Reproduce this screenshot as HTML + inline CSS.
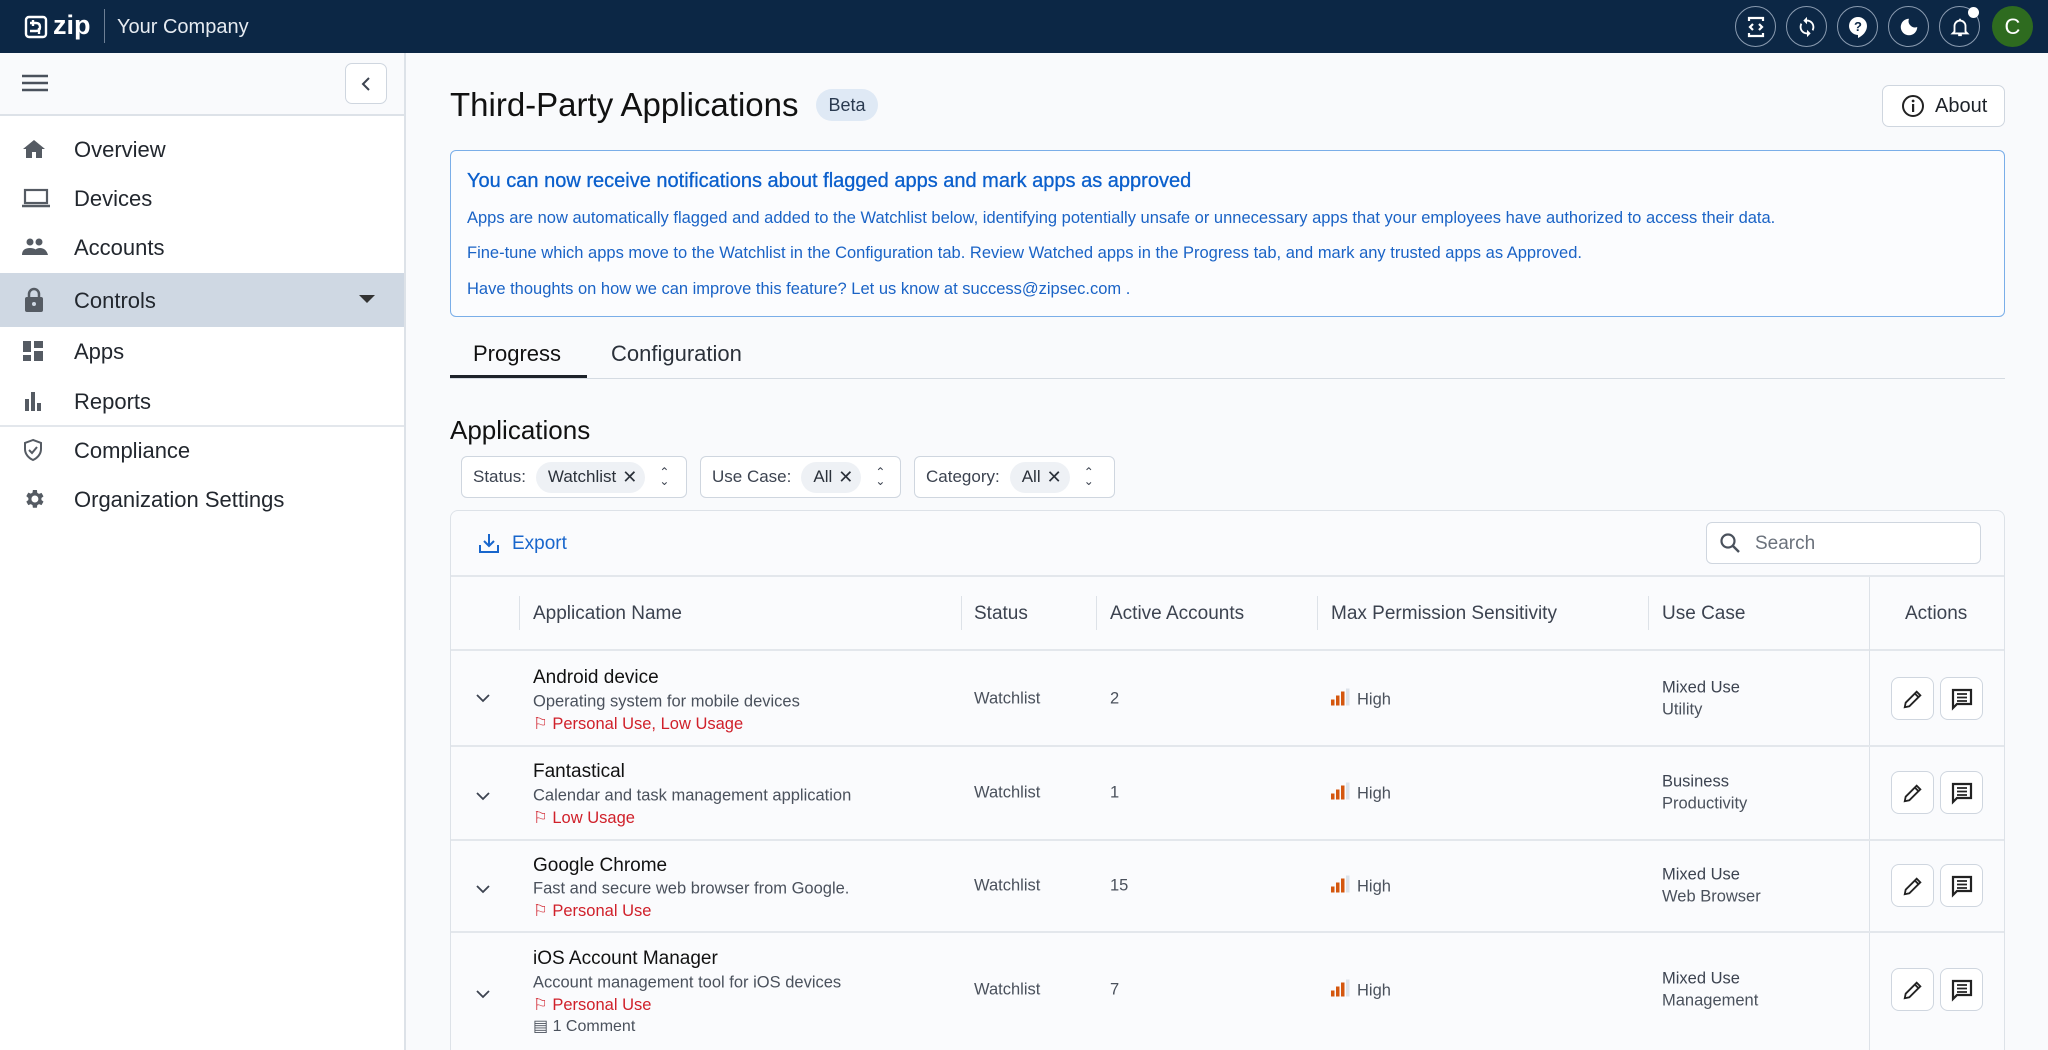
<!DOCTYPE html>
<html><head><meta charset="utf-8"><style>
*{box-sizing:border-box;margin:0;padding:0}
html{width:2048px;height:1050px;overflow:hidden}
body{width:2048px;height:1050px;overflow:hidden;background:#f9fafc;font-family:"Liberation Sans",sans-serif;color:#1d2229;position:relative}
.a{position:absolute;white-space:nowrap}
.hdr{left:0;top:0;width:2048px;height:53px;background:#0c2745}
.ic{width:41px;height:41px;border-radius:50%;border:1.5px solid #8a9bb0;top:6px;display:flex;align-items:center;justify-content:center}
.side{left:0;top:53px;width:406px;height:997px;background:#fff;border-right:2px solid #dde2e8}
.nav{left:74px;font-size:22px;color:#22272e;transform:translateY(-50%)}
.ni{left:22px;transform:translateY(-50%)}
.vline{width:1px;background:#dde2e8}
.hline{height:2px;background:#e3e7ec}
.th{font-size:19px;color:#3c4350;transform:translateY(-50%)}
.td{font-size:16.5px;color:#4a515c;transform:translateY(-50%)}
.nm{font-size:19px;color:#111;transform:translateY(-50%)}
.fl{font-size:16.5px;color:#d0202a;transform:translateY(-50%)}
.btn{width:43px;height:43px;border:1.5px solid #cfd6df;border-radius:8px;background:#fff;display:flex;align-items:center;justify-content:center}
.flt{height:42px;border:1.5px solid #cfd6df;border-radius:6px;background:#fff;top:456px;font-size:17px;color:#3c4350;display:flex;align-items:center;padding-left:11px}
.chip{background:#eef1f5;border-radius:16px;padding:5px 8px 5px 12px;margin-left:10px;display:flex;align-items:center;gap:6px;color:#2b313a}
</style></head><body>
<div class="a hdr"></div>
<svg class="a" style="left:24px;top:15px" width="24" height="24" viewBox="0 0 24 24" fill="none" stroke="#fff" stroke-width="2.4"><rect x="2" y="2" width="20" height="20" rx="3"/><path d="M6 8h6q4 0 4 4t-4 4H6M9 5v6M15 13v6"/></svg>
<div class="a" style="left:53px;top:10px;font-size:27px;font-weight:bold;color:#fff">zip</div>
<div class="a" style="left:104px;top:9px;width:1px;height:34px;background:#6d7f95"></div>
<div class="a" style="left:117px;top:16px;font-size:20px;color:#e6ebf1">Your Company</div>
<div class="a ic" style="left:1735px"><svg width="20" height="22" viewBox="0 0 20 22" fill="none" stroke="#fff" stroke-width="2.2"><path d="M3 5V2h14v3M3 17v3h14v-3M7 8l-3 3 3 3M13 8l3 3-3 3"/></svg></div>
<div class="a ic" style="left:1786px"><svg width="22" height="22" viewBox="0 0 24 24" fill="#fff"><path d="M12 4V1L8 5l4 4V6c3.3 0 6 2.7 6 6 0 1-.3 2-.7 2.8l1.5 1.5C19.5 15 20 13.6 20 12c0-4.4-3.6-8-8-8zm0 14c-3.3 0-6-2.7-6-6 0-1 .3-2 .7-2.8L5.2 7.7C4.5 9 4 10.4 4 12c0 4.4 3.6 8 8 8v3l4-4-4-4v3z"/></svg></div>
<div class="a ic" style="left:1837px"><svg width="24" height="24" viewBox="0 0 24 24"><path d="M12 2a9 9 0 0 0-9 9c0 4.8 4 9 9 9v3c4.5-2 9-6.5 9-12a9 9 0 0 0-9-9z" fill="#fff"/><text x="12" y="16" font-size="13" font-weight="bold" text-anchor="middle" fill="#0c2745" font-family="Liberation Sans">?</text></svg></div>
<div class="a ic" style="left:1888px"><svg width="22" height="22" viewBox="0 0 24 24"><path d="M12 3a9 9 0 1 0 9 9 7 7 0 0 1-9-9z" fill="#fff"/></svg></div>
<div class="a ic" style="left:1939px"><svg width="22" height="24" viewBox="0 0 24 24" fill="none" stroke="#fff" stroke-width="2"><path d="M6 17V11a6 6 0 0 1 12 0v6l2 2H4zM10 21h4M12 3v2"/></svg></div>
<div class="a" style="left:1968px;top:7px;width:11px;height:11px;border-radius:50%;background:#fff"></div>
<div class="a" style="left:1992px;top:6px;width:41px;height:41px;border-radius:50%;background:#2e6b1f;color:#fff;font-size:22px;display:flex;align-items:center;justify-content:center">C</div>

<div class="a side"></div>
<div class="a" style="left:0;top:53px;width:404px;height:63px;background:#f9fafc;border-bottom:2px solid #dde2e8"></div>
<svg class="a" style="left:22px;top:74px" width="26" height="18"><path d="M0 2h26M0 9h26M0 16h26" stroke="#4a515c" stroke-width="2.4"/></svg>
<div class="a" style="left:345px;top:63px;width:42px;height:41px;border:1.5px solid #cfd6df;border-radius:7px;background:#fff"></div>
<svg class="a" style="left:360px;top:76px" width="12" height="16"><path d="M9 2L3 8l6 6" fill="none" stroke="#3c4350" stroke-width="2"/></svg>
<div class="a" style="left:0;top:273px;width:404px;height:54px;background:#cfd8e3"></div>
<div class="a" style="left:0;top:425px;width:404px;height:2px;background:#e3e7ec"></div>
<svg class="a ni" style="top:149px" width="24" height="22" viewBox="0 0 24 22"><path d="M12 2L1 11h3v9h6v-6h4v6h6v-9h3z" fill="#555b63"/></svg>
<div class="a nav" style="top:150px">Overview</div>
<svg class="a ni" style="top:198px" width="28" height="20"><rect x="3" y="2" width="22" height="13" fill="none" stroke="#555b63" stroke-width="2.2"/><path d="M0 18h28" stroke="#555b63" stroke-width="2.4"/></svg>
<div class="a nav" style="top:199px">Devices</div>
<svg class="a ni" style="top:247px" width="26" height="18"><circle cx="8" cy="4" r="3.5" fill="#555b63"/><circle cx="17" cy="4" r="3.5" fill="#555b63"/><path d="M0 17q0-7 8-7t8 7zM11 17q1-7 7-7t8 7z" fill="#555b63"/></svg>
<div class="a nav" style="top:248px">Accounts</div>
<svg class="a ni" style="top:300px;left:24px" width="20" height="26"><path d="M5 10V7a5 5 0 0 1 10 0v3" fill="none" stroke="#555b63" stroke-width="2.5"/><rect x="1" y="10" width="18" height="15" rx="2" fill="#555b63"/><circle cx="10" cy="17" r="2" fill="#cfd8e3"/></svg>
<div class="a nav" style="top:301px">Controls</div>
<svg class="a" style="left:359px;top:295px" width="16" height="9"><path d="M0 0h16L8 8z" fill="#333"/></svg>
<svg class="a ni" style="top:351px" width="22" height="22"><rect x="1" y="1" width="8" height="11" fill="#555b63"/><rect x="12" y="1" width="9" height="7" fill="#555b63"/><rect x="1" y="15" width="8" height="6" fill="#555b63"/><rect x="12" y="11" width="9" height="10" fill="#555b63"/></svg>
<div class="a nav" style="top:352px">Apps</div>
<svg class="a ni" style="top:401px" width="22" height="20"><rect x="3" y="8" width="4" height="12" fill="#555b63"/><rect x="9" y="1" width="4" height="19" fill="#555b63"/><rect x="15" y="12" width="4" height="8" fill="#555b63"/></svg>
<div class="a nav" style="top:402px">Reports</div>
<svg class="a ni" style="top:450px" width="22" height="24" viewBox="0 0 22 24"><path d="M11 2L3 5v6c0 5 3.5 9 8 11 4.5-2 8-6 8-11V5z" fill="none" stroke="#555b63" stroke-width="2"/><path d="M7 12l3 3 5-6" fill="none" stroke="#555b63" stroke-width="2"/></svg>
<div class="a nav" style="top:451px">Compliance</div>
<svg class="a ni" style="top:499px" width="24" height="24" viewBox="0 0 24 24"><path fill="#555b63" d="M19.4 13a7.5 7.5 0 0 0 0-2l2.1-1.6-2-3.5-2.5 1a7 7 0 0 0-1.7-1L14.9 3h-4l-.4 2.6a7 7 0 0 0-1.7 1l-2.5-1-2 3.5L6.4 11a7.5 7.5 0 0 0 0 2l-2.1 1.6 2 3.5 2.5-1c.5.4 1.1.7 1.7 1l.4 2.6h4l.4-2.6c.6-.3 1.2-.6 1.7-1l2.5 1 2-3.5zM12.9 15.5a3.5 3.5 0 1 1 0-7 3.5 3.5 0 0 1 0 7z"/></svg>
<div class="a nav" style="top:500px">Organization Settings</div>

<div class="a" style="left:450px;top:86px;font-size:33px;color:#111">Third-Party Applications</div>
<div class="a" style="left:816px;top:89px;width:62px;height:32px;border-radius:16px;background:#dfe9f5;font-size:18px;color:#2a3a50;display:flex;align-items:center;justify-content:center">Beta</div>
<div class="a" style="left:1882px;top:85px;width:123px;height:42px;border:1.5px solid #cfd6df;border-radius:7px;background:#fff;display:flex;align-items:center;padding-left:18px;gap:10px;font-size:20px;color:#1d2229"><svg width="24" height="24"><circle cx="12" cy="12" r="10" fill="none" stroke="#222" stroke-width="2"/><rect x="11" y="10" width="2.2" height="8" fill="#222"/><circle cx="12.1" cy="7" r="1.4" fill="#222"/></svg>About</div>

<div class="a" style="left:450px;top:150px;width:1555px;height:167px;border:1.5px solid #7aaee8;border-radius:6px;background:#fbfcfe"></div>
<div class="a" style="left:467px;top:170px;font-size:20px;color:#0a5fcc;-webkit-text-stroke:0.3px #0a5fcc">You can now receive notifications about flagged apps and mark apps as approved</div>
<div class="a" style="left:467px;top:209px;font-size:16.5px;color:#1a63c6">Apps are now automatically flagged and added to the Watchlist below, identifying potentially unsafe or unnecessary apps that your employees have authorized to access their data.</div>
<div class="a" style="left:467px;top:244px;font-size:16.5px;color:#1a63c6">Fine-tune which apps move to the Watchlist in the Configuration tab. Review Watched apps in the Progress tab, and mark any trusted apps as Approved.</div>
<div class="a" style="left:467px;top:280px;font-size:16.5px;color:#1a63c6">Have thoughts on how we can improve this feature? Let us know at success@zipsec.com .</div>

<div class="a" style="left:473px;top:341px;font-size:22px;color:#111">Progress</div>
<div class="a" style="left:611px;top:341px;font-size:22px;color:#2b313a">Configuration</div>
<div class="a" style="left:450px;top:378px;width:1555px;height:1px;background:#d5dbe2"></div>
<div class="a" style="left:450px;top:375px;width:137px;height:3px;background:#1d2229"></div>

<div class="a" style="left:450px;top:415px;font-size:26px;color:#111">Applications</div>
<div class="a flt" style="left:461px;width:226px">Status:<span class="chip">Watchlist <span style="font-size:18px">✕</span></span><span style="margin-left:14px;font-size:12px;line-height:9px;text-align:center">⌃<br>⌄</span></div>
<div class="a flt" style="left:700px;width:201px">Use Case:<span class="chip">All <span style="font-size:18px">✕</span></span><span style="margin-left:14px;font-size:12px;line-height:9px;text-align:center">⌃<br>⌄</span></div>
<div class="a flt" style="left:914px;width:201px">Category:<span class="chip">All <span style="font-size:18px">✕</span></span><span style="margin-left:14px;font-size:12px;line-height:9px;text-align:center">⌃<br>⌄</span></div>

<div class="a" style="left:450px;top:510px;width:1555px;height:540px;border:1.5px solid #dde2e8;border-bottom:none;border-radius:8px 8px 0 0;background:#fafbfd"></div>
<svg class="a" style="left:478px;top:532px" width="22" height="22" viewBox="0 0 22 22" fill="none" stroke="#1866cc" stroke-width="2"><path d="M11 2v11M6 9l5 5 5-5M2 13v7h18v-7"/></svg>
<div class="a" style="left:512px;top:533px;font-size:19px;color:#1866cc">Export</div>
<div class="a" style="left:1706px;top:522px;width:275px;height:42px;border:1.5px solid #cfd6df;border-radius:6px;background:#fff"></div>
<svg class="a" style="left:1719px;top:532px" width="22" height="22"><circle cx="9" cy="9" r="6.5" fill="none" stroke="#4a515c" stroke-width="2.2"/><path d="M14 14l6 6" stroke="#4a515c" stroke-width="2.4"/></svg>
<div class="a" style="left:1755px;top:533px;font-size:19px;color:#6b727c">Search</div>

<div class="a hline" style="left:451px;top:575px;width:1553px"></div>
<div class="a hline" style="left:451px;top:649px;width:1553px"></div>
<div class="a vline" style="left:519px;top:596px;height:34px"></div>
<div class="a vline" style="left:961px;top:596px;height:34px"></div>
<div class="a vline" style="left:1096px;top:596px;height:34px"></div>
<div class="a vline" style="left:1317px;top:596px;height:34px"></div>
<div class="a vline" style="left:1648px;top:596px;height:34px"></div>
<div class="a vline" style="left:1869px;top:577px;height:473px"></div>
<div class="a th" style="left:533px;top:614px">Application Name</div>
<div class="a th" style="left:974px;top:614px">Status</div>
<div class="a th" style="left:1110px;top:614px">Active Accounts</div>
<div class="a th" style="left:1331px;top:614px">Max Permission Sensitivity</div>
<div class="a th" style="left:1662px;top:614px">Use Case</div>
<div class="a th" style="left:1905px;top:614px">Actions</div>

<div class="a hline" style="left:451px;top:745px;width:1553px"></div>
<div class="a hline" style="left:451px;top:839px;width:1553px"></div>
<div class="a hline" style="left:451px;top:931px;width:1553px"></div>

<svg class="a" style="left:476px;top:694px" width="14" height="9"><path d="M1 1l6 6 6-6" fill="none" stroke="#3c4350" stroke-width="1.8"/></svg>
<div class="a nm" style="left:533px;top:678px">Android device</div>
<div class="a td" style="left:533px;top:702px">Operating system for mobile devices</div>
<div class="a fl" style="left:533px;top:724px">⚐ Personal Use, Low Usage</div>
<div class="a td" style="left:974px;top:699px">Watchlist</div>
<div class="a td" style="left:1110px;top:699px">2</div>
<div class="a td" style="left:1331px;top:699px"><svg width="20" height="18" style="vertical-align:-2px;margin-right:6px"><rect x="0" y="11" width="3.5" height="6" fill="#d4570f"/><rect x="5" y="7" width="3.5" height="10" fill="#d4570f"/><rect x="10" y="3" width="3.5" height="14" fill="#d4570f"/><rect x="15" y="0" width="3.5" height="17" fill="#dde3ea"/></svg>High</div>
<div class="a td" style="left:1662px;top:688px;color:#3c4350">Mixed Use</div>
<div class="a td" style="left:1662px;top:710px">Utility</div>

<div class="a" style="left:476px;top:788px"><svg width="14" height="9"><path d="M1 1l6 6 6-6" fill="none" stroke="#3c4350" stroke-width="1.8"/></svg></div>
<div class="a nm" style="left:533px;top:772px">Fantastical</div>
<div class="a td" style="left:533px;top:796px">Calendar and task management application</div>
<div class="a fl" style="left:533px;top:818px">⚐ Low Usage</div>
<div class="a td" style="left:974px;top:793px">Watchlist</div>
<div class="a td" style="left:1110px;top:793px">1</div>
<div class="a td" style="left:1331px;top:793px"><svg width="20" height="18" style="vertical-align:-2px;margin-right:6px"><rect x="0" y="11" width="3.5" height="6" fill="#d4570f"/><rect x="5" y="7" width="3.5" height="10" fill="#d4570f"/><rect x="10" y="3" width="3.5" height="14" fill="#d4570f"/><rect x="15" y="0" width="3.5" height="17" fill="#dde3ea"/></svg>High</div>
<div class="a td" style="left:1662px;top:782px;color:#3c4350">Business</div>
<div class="a td" style="left:1662px;top:804px">Productivity</div>

<div class="a" style="left:476px;top:881px"><svg width="14" height="9"><path d="M1 1l6 6 6-6" fill="none" stroke="#3c4350" stroke-width="1.8"/></svg></div>
<div class="a nm" style="left:533px;top:866px">Google Chrome</div>
<div class="a td" style="left:533px;top:889px">Fast and secure web browser from Google.</div>
<div class="a fl" style="left:533px;top:911px">⚐ Personal Use</div>
<div class="a td" style="left:974px;top:886px">Watchlist</div>
<div class="a td" style="left:1110px;top:886px">15</div>
<div class="a td" style="left:1331px;top:886px"><svg width="20" height="18" style="vertical-align:-2px;margin-right:6px"><rect x="0" y="11" width="3.5" height="6" fill="#d4570f"/><rect x="5" y="7" width="3.5" height="10" fill="#d4570f"/><rect x="10" y="3" width="3.5" height="14" fill="#d4570f"/><rect x="15" y="0" width="3.5" height="17" fill="#dde3ea"/></svg>High</div>
<div class="a td" style="left:1662px;top:875px;color:#3c4350">Mixed Use</div>
<div class="a td" style="left:1662px;top:897px">Web Browser</div>

<div class="a" style="left:476px;top:986px"><svg width="14" height="9"><path d="M1 1l6 6 6-6" fill="none" stroke="#3c4350" stroke-width="1.8"/></svg></div>
<div class="a nm" style="left:533px;top:959px">iOS Account Manager</div>
<div class="a td" style="left:533px;top:983px">Account management tool for iOS devices</div>
<div class="a fl" style="left:533px;top:1005px">⚐ Personal Use</div>
<div class="a td" style="left:533px;top:1026px;font-size:16px">▤ 1 Comment</div>
<div class="a td" style="left:974px;top:990px">Watchlist</div>
<div class="a td" style="left:1110px;top:990px">7</div>
<div class="a td" style="left:1331px;top:990px"><svg width="20" height="18" style="vertical-align:-2px;margin-right:6px"><rect x="0" y="11" width="3.5" height="6" fill="#d4570f"/><rect x="5" y="7" width="3.5" height="10" fill="#d4570f"/><rect x="10" y="3" width="3.5" height="14" fill="#d4570f"/><rect x="15" y="0" width="3.5" height="17" fill="#dde3ea"/></svg>High</div>
<div class="a td" style="left:1662px;top:979px;color:#3c4350">Mixed Use</div>
<div class="a td" style="left:1662px;top:1001px">Management</div>

<div class="a btn" style="left:1891px;top:677px"><svg width="22" height="22" viewBox="0 0 24 24"><path d="M3 21l1-5L16 4l4 4L8 20zM14 6l4 4" fill="none" stroke="#222" stroke-width="2"/></svg></div>
<div class="a btn" style="left:1940px;top:677px"><svg width="24" height="24" viewBox="0 0 24 24"><path d="M3 3h18v14H7l-4 4z" fill="none" stroke="#222" stroke-width="2.2"/><path d="M7 7h10M7 10.5h10M7 14h10" stroke="#222" stroke-width="1.8"/></svg></div>
<div class="a btn" style="left:1891px;top:771px"><svg width="22" height="22" viewBox="0 0 24 24"><path d="M3 21l1-5L16 4l4 4L8 20zM14 6l4 4" fill="none" stroke="#222" stroke-width="2"/></svg></div>
<div class="a btn" style="left:1940px;top:771px"><svg width="24" height="24" viewBox="0 0 24 24"><path d="M3 3h18v14H7l-4 4z" fill="none" stroke="#222" stroke-width="2.2"/><path d="M7 7h10M7 10.5h10M7 14h10" stroke="#222" stroke-width="1.8"/></svg></div>
<div class="a btn" style="left:1891px;top:864px"><svg width="22" height="22" viewBox="0 0 24 24"><path d="M3 21l1-5L16 4l4 4L8 20zM14 6l4 4" fill="none" stroke="#222" stroke-width="2"/></svg></div>
<div class="a btn" style="left:1940px;top:864px"><svg width="24" height="24" viewBox="0 0 24 24"><path d="M3 3h18v14H7l-4 4z" fill="none" stroke="#222" stroke-width="2.2"/><path d="M7 7h10M7 10.5h10M7 14h10" stroke="#222" stroke-width="1.8"/></svg></div>
<div class="a btn" style="left:1891px;top:968px"><svg width="22" height="22" viewBox="0 0 24 24"><path d="M3 21l1-5L16 4l4 4L8 20zM14 6l4 4" fill="none" stroke="#222" stroke-width="2"/></svg></div>
<div class="a btn" style="left:1940px;top:968px"><svg width="24" height="24" viewBox="0 0 24 24"><path d="M3 3h18v14H7l-4 4z" fill="none" stroke="#222" stroke-width="2.2"/><path d="M7 7h10M7 10.5h10M7 14h10" stroke="#222" stroke-width="1.8"/></svg></div>
</body></html>
